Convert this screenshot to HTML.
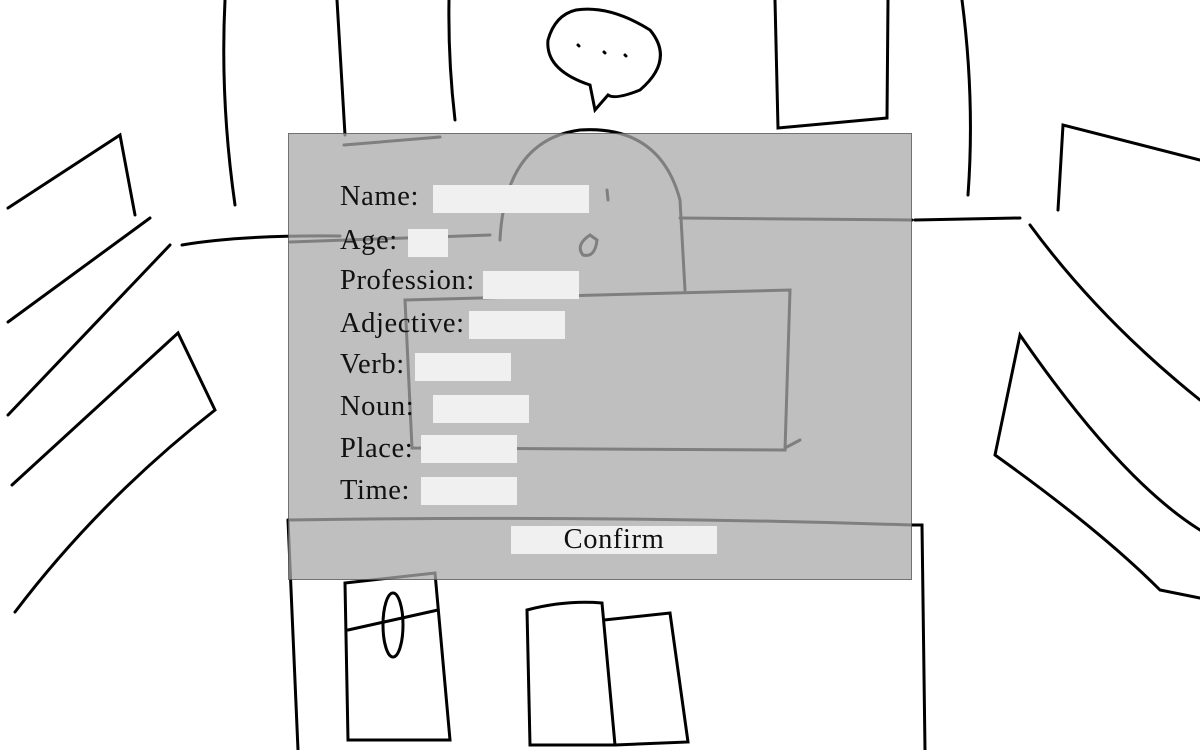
<!DOCTYPE html>
<html><head><meta charset="utf-8"><style>
body{margin:0;width:1200px;height:750px;overflow:hidden;background:#fff;position:relative;font-family:"Liberation Serif",serif}
svg{position:absolute;left:0;top:0}
#dlg{position:absolute;left:288px;top:133px;width:624px;height:447px;background:rgba(170,170,170,0.75);box-shadow:inset 0 0 0 1px rgba(0,0,0,.4)}
.l{position:absolute;font-size:28.5px;letter-spacing:0.6px;color:#111;line-height:30px}
.b{position:absolute;background:#f0f0f0;height:28px}
</style></head><body>
<svg width="1200" height="750" fill="none" stroke="#000" stroke-width="3" stroke-linecap="round">
<path d="M225 0 Q220 100 235 205"/>
<path d="M337 0 L345 135"/>
<path d="M449 0 Q448 60 455 120"/>
<path d="M344 145 L440 137"/>
<path d="M775 0 L778 128 L887 118 L888 0"/>
<path d="M962 0 Q975 100 968 195"/>
<path d="M8 208 L120 135 L135 215"/>
<path d="M8 322 L150 218"/>
<path d="M182 245 Q240 235 340 236"/>
<path d="M8 415 L170 245"/>
<path d="M12 485 L178 333 L215 410 Q100 500 15 612"/>
<path d="M915 220 L1020 218"/>
<path d="M1058 210 L1063 125 L1200 160"/>
<path d="M1030 225 Q1100 320 1200 400"/>
<path d="M995 455 L1020 335 Q1120 480 1200 530"/>
<path d="M995 455 Q1100 530 1160 590 L1200 598"/>
<path d="M288 520 L298 750"/>
<path d="M912 525 L922 525 L925 750"/>
<path d="M345 583 L435 573 L450 740 L348 740 Z"/>
<path d="M348 630 L438 610"/>
<ellipse cx="393" cy="625" rx="10" ry="32"/>
<path d="M527 610 Q565 600 602 603 L615 745 L530 745 Z"/>
<path d="M604 620 L670 613 L688 742 L615 745"/>
<path d="M576 10 Q610 5 650 30 Q675 60 640 90 Q615 100 608 95 L595 110 L590 85 Q545 70 548 40 Q555 15 576 10 Z"/>
<path d="M578 45 l1 1 M604 52 l1 1 M625 55 l1 1"/>
<path d="M500 240 Q505 140 580 130 Q660 125 680 200 L685 290"/>
<path d="M680 218 L912 220"/>
<path d="M405 300 L790 290 L785 450 L412 448 Z M785 448 L800 440"/>
<path d="M590 235 Q575 245 583 255 Q595 258 597 240 Z"/>
<path d="M607 190 L608 200"/>
<path d="M288 520 Q600 515 912 525"/>
<path d="M290 242 L490 235"/>
</svg>
<div id="dlg"></div>
<div class="l" style="left:340px;top:182px">Name:</div><div class="b" style="left:433px;top:185px;width:156px"></div>
<div class="l" style="left:340px;top:226px">Age:</div><div class="b" style="left:408px;top:229px;width:40px"></div>
<div class="l" style="left:340px;top:266px">Profession:</div><div class="b" style="left:483px;top:271px;width:96px"></div>
<div class="l" style="left:340px;top:309px">Adjective:</div><div class="b" style="left:469px;top:311px;width:96px"></div>
<div class="l" style="left:340px;top:350px">Verb:</div><div class="b" style="left:415px;top:353px;width:96px"></div>
<div class="l" style="left:340px;top:392px">Noun:</div><div class="b" style="left:433px;top:395px;width:96px"></div>
<div class="l" style="left:340px;top:434px">Place:</div><div class="b" style="left:421px;top:435px;width:96px"></div>
<div class="l" style="left:340px;top:476px">Time:</div><div class="b" style="left:421px;top:477px;width:96px"></div>
<div class="b" style="left:511px;top:526px;width:206px;text-align:center;font-size:28.5px;letter-spacing:0.6px;line-height:28px;color:#111">Confirm</div>
</body></html>
